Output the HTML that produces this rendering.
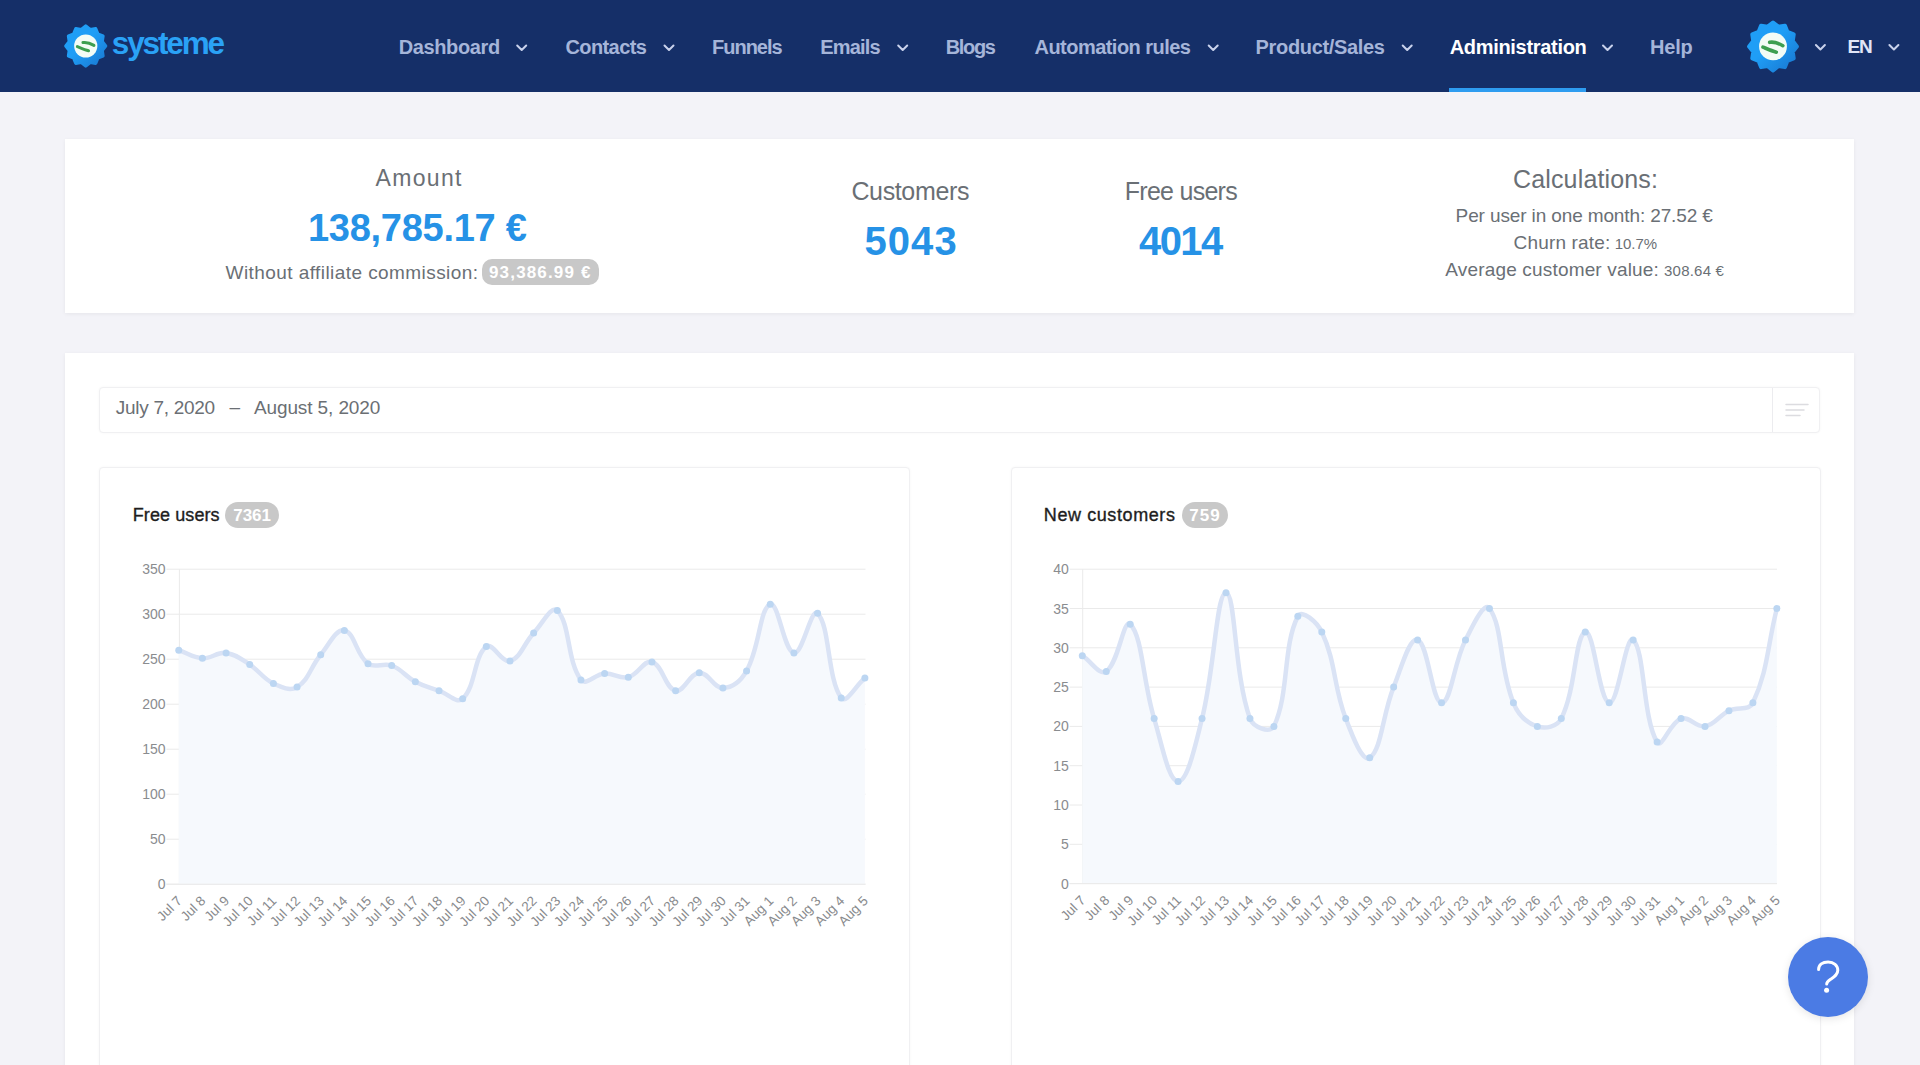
<!DOCTYPE html>
<html lang="en">
<head>
<meta charset="utf-8">
<title>systeme - Administration</title>
<style>
html,body{margin:0;padding:0;}
body{width:1920px;height:1065px;overflow:hidden;position:relative;background:#f3f3f8;font-family:"Liberation Sans",sans-serif;}
.t{position:absolute;white-space:nowrap;}
.nav{position:absolute;left:0;top:0;width:1920px;height:92px;background:#152f68;}
.uline{position:absolute;left:1449px;top:88px;width:137px;height:4px;background:#2e9cf0;}
.card{position:absolute;background:#fff;box-shadow:0 1px 4px rgba(0,0,0,0.06);}
.box{position:absolute;background:#fff;border:1px solid #f0f0f2;border-radius:4px;box-sizing:border-box;box-shadow:0 0 3px rgba(0,0,0,0.035);}
.badge{position:absolute;background:#c8c8c8;border-radius:13px;}
.help{position:absolute;left:1787.6px;top:936.5px;width:80px;height:80px;border-radius:50%;background:#4b7be4;box-shadow:0 2px 8px rgba(0,0,0,0.10);}
svg.ov{position:absolute;left:0;top:0;}
.yl{font-family:"Liberation Sans",sans-serif;font-size:14px;fill:#8a8c8f;}
.xl{font-family:"Liberation Sans",sans-serif;font-size:13.5px;fill:#888a8d;}
</style>
</head>
<body>
<div class="nav"></div>
<div class="uline"></div>

<!-- logo gear -->
<svg class="ov" width="1920" height="92" viewBox="0 0 1920 92">
  
  <g transform="translate(85.75,46)">
      <linearGradient id="gg1" x1="0" y1="0" x2="1" y2="1"><stop offset="0.45" stop-color="#1f9ef6"/><stop offset="1" stop-color="#1876d0"/></linearGradient>
      <polygon points="0.00,-19.90 4.40,-16.42 9.95,-17.23 12.02,-12.02 17.23,-9.95 16.42,-4.40 19.90,0.00 16.42,4.40 17.23,9.95 12.02,12.02 9.95,17.23 4.40,16.42 0.00,19.90 -4.40,16.42 -9.95,17.23 -12.02,12.02 -17.23,9.95 -16.42,4.40 -19.90,0.00 -16.42,-4.40 -17.23,-9.95 -12.02,-12.02 -9.95,-17.23 -4.40,-16.42" fill="url(#gg1)" stroke="url(#gg1)" stroke-width="3.4" stroke-linejoin="round"/>
      <circle cx="0" cy="0" r="11.6" fill="#f3fcf6"/>
      <path d="M-2.8,-3.4 C1,-4 5,-2.5 8.2,-0.6" fill="none" stroke="#3d9f50" stroke-width="3" stroke-linecap="round"/>
      <path d="M-8.4,0.6 C-5,2 -1,3.8 2.8,4.8" fill="none" stroke="#3d9f50" stroke-width="3" stroke-linecap="round"/>
    </g>
  <g transform="translate(1773,46.4) scale(1.2)">
      <linearGradient id="gg2" x1="0" y1="0" x2="1" y2="1"><stop offset="0.45" stop-color="#1f9ef6"/><stop offset="1" stop-color="#1876d0"/></linearGradient>
      <polygon points="0.00,-19.90 4.40,-16.42 9.95,-17.23 12.02,-12.02 17.23,-9.95 16.42,-4.40 19.90,0.00 16.42,4.40 17.23,9.95 12.02,12.02 9.95,17.23 4.40,16.42 0.00,19.90 -4.40,16.42 -9.95,17.23 -12.02,12.02 -17.23,9.95 -16.42,4.40 -19.90,0.00 -16.42,-4.40 -17.23,-9.95 -12.02,-12.02 -9.95,-17.23 -4.40,-16.42" fill="url(#gg2)" stroke="url(#gg2)" stroke-width="3.4" stroke-linejoin="round"/>
      <circle cx="0" cy="0" r="11.6" fill="#f3fcf6"/>
      <path d="M-2.8,-3.4 C1,-4 5,-2.5 8.2,-0.6" fill="none" stroke="#3d9f50" stroke-width="3" stroke-linecap="round"/>
      <path d="M-8.4,0.6 C-5,2 -1,3.8 2.8,4.8" fill="none" stroke="#3d9f50" stroke-width="3" stroke-linecap="round"/>
    </g>
  <g fill="none" stroke="#c9d2ec" stroke-width="2" stroke-linecap="round" stroke-linejoin="round">
    <path d="M517.2,45.5 L521.7,50 L526.2,45.5"/>
    <path d="M664.5,45.5 L669,50 L673.5,45.5"/>
    <path d="M898.2,45.5 L902.7,50 L907.2,45.5"/>
    <path d="M1208.7,45.5 L1213.2,50 L1217.7,45.5"/>
    <path d="M1402.7,45.5 L1407.2,50 L1411.7,45.5"/>
    <path d="M1603,45.5 L1607.5,50 L1612,45.5"/>
    <path d="M1815.9,45 L1820.4,49.5 L1824.9,45"/>
    <path d="M1889.4,45 L1893.9,49.5 L1898.4,45"/>
  </g>
</svg>

<!-- cards -->
<div class="card" style="left:65px;top:139px;width:1789px;height:174px;"></div>
<div class="card" style="left:65px;top:353px;width:1789px;height:760px;"></div>

<div class="box" style="left:99px;top:387px;width:1721px;height:46px;"></div>
<div style="position:absolute;left:1772px;top:388px;width:1px;height:44px;background:#ececef;"></div>
<svg class="ov" style="left:1780px;top:398px" width="34" height="24" viewBox="0 0 34 24">
  <g stroke="#dcdce0" stroke-width="1.5" stroke-linecap="round">
    <line x1="6" y1="6.5" x2="28" y2="6.5"/>
    <line x1="6" y1="12" x2="24" y2="12"/>
    <line x1="6" y1="17.5" x2="20" y2="17.5"/>
  </g>
</svg>

<div class="box" style="left:98.5px;top:467px;width:811px;height:700px;"></div>
<div class="box" style="left:1011px;top:467px;width:809.5px;height:700px;"></div>

<!-- badges -->
<div class="badge" style="left:482px;top:259px;width:117px;height:26px;border-radius:10px;"></div>
<div class="badge" style="left:225px;top:502px;width:54px;height:26px;"></div>
<div class="badge" style="left:1181.5px;top:502px;width:46.5px;height:26px;"></div>

<!-- charts -->
<svg class="ov" width="1920" height="1065" viewBox="0 0 1920 1065">
<line x1="166.4" y1="884.20" x2="865.5" y2="884.20" stroke="#eaeaea" stroke-width="1"/>
<text x="165.5" y="889.20" text-anchor="end" class="yl">0</text>
<line x1="166.4" y1="839.20" x2="865.5" y2="839.20" stroke="#eaeaea" stroke-width="1"/>
<text x="165.5" y="844.20" text-anchor="end" class="yl">50</text>
<line x1="166.4" y1="794.20" x2="865.5" y2="794.20" stroke="#eaeaea" stroke-width="1"/>
<text x="165.5" y="799.20" text-anchor="end" class="yl">100</text>
<line x1="166.4" y1="749.20" x2="865.5" y2="749.20" stroke="#eaeaea" stroke-width="1"/>
<text x="165.5" y="754.20" text-anchor="end" class="yl">150</text>
<line x1="166.4" y1="704.20" x2="865.5" y2="704.20" stroke="#eaeaea" stroke-width="1"/>
<text x="165.5" y="709.20" text-anchor="end" class="yl">200</text>
<line x1="166.4" y1="659.20" x2="865.5" y2="659.20" stroke="#eaeaea" stroke-width="1"/>
<text x="165.5" y="664.20" text-anchor="end" class="yl">250</text>
<line x1="166.4" y1="614.20" x2="865.5" y2="614.20" stroke="#eaeaea" stroke-width="1"/>
<text x="165.5" y="619.20" text-anchor="end" class="yl">300</text>
<line x1="166.4" y1="569.20" x2="865.5" y2="569.20" stroke="#eaeaea" stroke-width="1"/>
<text x="165.5" y="574.20" text-anchor="end" class="yl">350</text>
<line x1="179.4" y1="569.20" x2="179.4" y2="884.20" stroke="#eaeaea" stroke-width="1"/>
<path d="M178.75,650.20 C188.21,653.44 192.80,657.75 202.41,658.30 C211.73,658.83 217.00,651.69 226.07,652.90 C235.93,654.21 240.92,658.90 249.73,664.60 C259.84,671.14 262.82,678.47 273.39,683.50 C281.75,687.47 289.98,691.40 297.05,687.10 C308.91,679.88 310.45,666.99 320.71,654.70 C329.38,644.31 335.78,628.77 344.37,630.40 C354.71,632.37 356.06,654.82 368.03,663.70 C374.98,668.86 383.12,662.24 391.69,665.50 C402.05,669.44 405.30,676.35 415.35,681.70 C424.22,686.43 429.49,687.26 439.01,690.70 C448.42,694.10 456.92,704.16 462.67,698.80 C475.85,686.52 473.57,656.79 486.33,646.60 C492.50,641.67 501.83,663.33 509.99,661.00 C520.76,657.93 523.65,643.75 533.65,633.10 C542.58,623.59 551.47,604.83 557.31,610.60 C570.40,623.55 566.78,661.01 580.97,679.90 C585.71,686.21 595.06,674.15 604.63,673.60 C613.99,673.07 619.60,679.35 628.29,677.20 C638.52,674.67 643.80,659.58 651.95,661.90 C662.73,664.98 665.08,688.30 675.61,690.70 C684.01,692.62 689.55,673.25 699.27,672.70 C708.48,672.17 713.63,688.35 722.93,688.00 C732.56,687.63 741.06,680.69 746.59,670.90 C759.99,647.21 759.52,608.38 770.25,604.30 C778.45,601.18 783.70,650.96 793.91,652.90 C802.63,654.56 811.05,607.10 817.57,613.30 C829.98,625.10 827.22,678.72 841.23,697.90 C846.15,704.64 855.43,686.02 864.89,678.10 L864.89,884.20 L178.75,884.20 Z" fill="#f6f9fd"/>
<line x1="166.4" y1="884.20" x2="865.5" y2="884.20" stroke="#eaeaea" stroke-width="1"/>
<path d="M178.75,650.20 C188.21,653.44 192.80,657.75 202.41,658.30 C211.73,658.83 217.00,651.69 226.07,652.90 C235.93,654.21 240.92,658.90 249.73,664.60 C259.84,671.14 262.82,678.47 273.39,683.50 C281.75,687.47 289.98,691.40 297.05,687.10 C308.91,679.88 310.45,666.99 320.71,654.70 C329.38,644.31 335.78,628.77 344.37,630.40 C354.71,632.37 356.06,654.82 368.03,663.70 C374.98,668.86 383.12,662.24 391.69,665.50 C402.05,669.44 405.30,676.35 415.35,681.70 C424.22,686.43 429.49,687.26 439.01,690.70 C448.42,694.10 456.92,704.16 462.67,698.80 C475.85,686.52 473.57,656.79 486.33,646.60 C492.50,641.67 501.83,663.33 509.99,661.00 C520.76,657.93 523.65,643.75 533.65,633.10 C542.58,623.59 551.47,604.83 557.31,610.60 C570.40,623.55 566.78,661.01 580.97,679.90 C585.71,686.21 595.06,674.15 604.63,673.60 C613.99,673.07 619.60,679.35 628.29,677.20 C638.52,674.67 643.80,659.58 651.95,661.90 C662.73,664.98 665.08,688.30 675.61,690.70 C684.01,692.62 689.55,673.25 699.27,672.70 C708.48,672.17 713.63,688.35 722.93,688.00 C732.56,687.63 741.06,680.69 746.59,670.90 C759.99,647.21 759.52,608.38 770.25,604.30 C778.45,601.18 783.70,650.96 793.91,652.90 C802.63,654.56 811.05,607.10 817.57,613.30 C829.98,625.10 827.22,678.72 841.23,697.90 C846.15,704.64 855.43,686.02 864.89,678.10" fill="none" stroke="#dae3f5" stroke-width="4.5" stroke-linejoin="round"/>
<circle cx="178.75" cy="650.20" r="3.5" fill="#bcd6f2"/>
<circle cx="202.41" cy="658.30" r="3.5" fill="#bcd6f2"/>
<circle cx="226.07" cy="652.90" r="3.5" fill="#bcd6f2"/>
<circle cx="249.73" cy="664.60" r="3.5" fill="#bcd6f2"/>
<circle cx="273.39" cy="683.50" r="3.5" fill="#bcd6f2"/>
<circle cx="297.05" cy="687.10" r="3.5" fill="#bcd6f2"/>
<circle cx="320.71" cy="654.70" r="3.5" fill="#bcd6f2"/>
<circle cx="344.37" cy="630.40" r="3.5" fill="#bcd6f2"/>
<circle cx="368.03" cy="663.70" r="3.5" fill="#bcd6f2"/>
<circle cx="391.69" cy="665.50" r="3.5" fill="#bcd6f2"/>
<circle cx="415.35" cy="681.70" r="3.5" fill="#bcd6f2"/>
<circle cx="439.01" cy="690.70" r="3.5" fill="#bcd6f2"/>
<circle cx="462.67" cy="698.80" r="3.5" fill="#bcd6f2"/>
<circle cx="486.33" cy="646.60" r="3.5" fill="#bcd6f2"/>
<circle cx="509.99" cy="661.00" r="3.5" fill="#bcd6f2"/>
<circle cx="533.65" cy="633.10" r="3.5" fill="#bcd6f2"/>
<circle cx="557.31" cy="610.60" r="3.5" fill="#bcd6f2"/>
<circle cx="580.97" cy="679.90" r="3.5" fill="#bcd6f2"/>
<circle cx="604.63" cy="673.60" r="3.5" fill="#bcd6f2"/>
<circle cx="628.29" cy="677.20" r="3.5" fill="#bcd6f2"/>
<circle cx="651.95" cy="661.90" r="3.5" fill="#bcd6f2"/>
<circle cx="675.61" cy="690.70" r="3.5" fill="#bcd6f2"/>
<circle cx="699.27" cy="672.70" r="3.5" fill="#bcd6f2"/>
<circle cx="722.93" cy="688.00" r="3.5" fill="#bcd6f2"/>
<circle cx="746.59" cy="670.90" r="3.5" fill="#bcd6f2"/>
<circle cx="770.25" cy="604.30" r="3.5" fill="#bcd6f2"/>
<circle cx="793.91" cy="652.90" r="3.5" fill="#bcd6f2"/>
<circle cx="817.57" cy="613.30" r="3.5" fill="#bcd6f2"/>
<circle cx="841.23" cy="697.90" r="3.5" fill="#bcd6f2"/>
<circle cx="864.89" cy="678.10" r="3.5" fill="#bcd6f2"/>
<text class="xl" text-anchor="end" transform="translate(182.75,901.70) rotate(-45)">Jul 7</text>
<text class="xl" text-anchor="end" transform="translate(206.41,901.70) rotate(-45)">Jul 8</text>
<text class="xl" text-anchor="end" transform="translate(230.07,901.70) rotate(-45)">Jul 9</text>
<text class="xl" text-anchor="end" transform="translate(253.73,901.70) rotate(-45)">Jul 10</text>
<text class="xl" text-anchor="end" transform="translate(277.39,901.70) rotate(-45)">Jul 11</text>
<text class="xl" text-anchor="end" transform="translate(301.05,901.70) rotate(-45)">Jul 12</text>
<text class="xl" text-anchor="end" transform="translate(324.71,901.70) rotate(-45)">Jul 13</text>
<text class="xl" text-anchor="end" transform="translate(348.37,901.70) rotate(-45)">Jul 14</text>
<text class="xl" text-anchor="end" transform="translate(372.03,901.70) rotate(-45)">Jul 15</text>
<text class="xl" text-anchor="end" transform="translate(395.69,901.70) rotate(-45)">Jul 16</text>
<text class="xl" text-anchor="end" transform="translate(419.35,901.70) rotate(-45)">Jul 17</text>
<text class="xl" text-anchor="end" transform="translate(443.01,901.70) rotate(-45)">Jul 18</text>
<text class="xl" text-anchor="end" transform="translate(466.67,901.70) rotate(-45)">Jul 19</text>
<text class="xl" text-anchor="end" transform="translate(490.33,901.70) rotate(-45)">Jul 20</text>
<text class="xl" text-anchor="end" transform="translate(513.99,901.70) rotate(-45)">Jul 21</text>
<text class="xl" text-anchor="end" transform="translate(537.65,901.70) rotate(-45)">Jul 22</text>
<text class="xl" text-anchor="end" transform="translate(561.31,901.70) rotate(-45)">Jul 23</text>
<text class="xl" text-anchor="end" transform="translate(584.97,901.70) rotate(-45)">Jul 24</text>
<text class="xl" text-anchor="end" transform="translate(608.63,901.70) rotate(-45)">Jul 25</text>
<text class="xl" text-anchor="end" transform="translate(632.29,901.70) rotate(-45)">Jul 26</text>
<text class="xl" text-anchor="end" transform="translate(655.95,901.70) rotate(-45)">Jul 27</text>
<text class="xl" text-anchor="end" transform="translate(679.61,901.70) rotate(-45)">Jul 28</text>
<text class="xl" text-anchor="end" transform="translate(703.27,901.70) rotate(-45)">Jul 29</text>
<text class="xl" text-anchor="end" transform="translate(726.93,901.70) rotate(-45)">Jul 30</text>
<text class="xl" text-anchor="end" transform="translate(750.59,901.70) rotate(-45)">Jul 31</text>
<text class="xl" text-anchor="end" transform="translate(774.25,901.70) rotate(-45)">Aug 1</text>
<text class="xl" text-anchor="end" transform="translate(797.91,901.70) rotate(-45)">Aug 2</text>
<text class="xl" text-anchor="end" transform="translate(821.57,901.70) rotate(-45)">Aug 3</text>
<text class="xl" text-anchor="end" transform="translate(845.23,901.70) rotate(-45)">Aug 4</text>
<text class="xl" text-anchor="end" transform="translate(868.89,901.70) rotate(-45)">Aug 5</text>
<line x1="1069.7" y1="883.60" x2="1777.0" y2="883.60" stroke="#eaeaea" stroke-width="1"/>
<text x="1068.8" y="888.60" text-anchor="end" class="yl">0</text>
<line x1="1069.7" y1="844.30" x2="1777.0" y2="844.30" stroke="#eaeaea" stroke-width="1"/>
<text x="1068.8" y="849.30" text-anchor="end" class="yl">5</text>
<line x1="1069.7" y1="805.00" x2="1777.0" y2="805.00" stroke="#eaeaea" stroke-width="1"/>
<text x="1068.8" y="810.00" text-anchor="end" class="yl">10</text>
<line x1="1069.7" y1="765.70" x2="1777.0" y2="765.70" stroke="#eaeaea" stroke-width="1"/>
<text x="1068.8" y="770.70" text-anchor="end" class="yl">15</text>
<line x1="1069.7" y1="726.40" x2="1777.0" y2="726.40" stroke="#eaeaea" stroke-width="1"/>
<text x="1068.8" y="731.40" text-anchor="end" class="yl">20</text>
<line x1="1069.7" y1="687.10" x2="1777.0" y2="687.10" stroke="#eaeaea" stroke-width="1"/>
<text x="1068.8" y="692.10" text-anchor="end" class="yl">25</text>
<line x1="1069.7" y1="647.80" x2="1777.0" y2="647.80" stroke="#eaeaea" stroke-width="1"/>
<text x="1068.8" y="652.80" text-anchor="end" class="yl">30</text>
<line x1="1069.7" y1="608.50" x2="1777.0" y2="608.50" stroke="#eaeaea" stroke-width="1"/>
<text x="1068.8" y="613.50" text-anchor="end" class="yl">35</text>
<line x1="1069.7" y1="569.20" x2="1777.0" y2="569.20" stroke="#eaeaea" stroke-width="1"/>
<text x="1068.8" y="574.20" text-anchor="end" class="yl">40</text>
<line x1="1082.7" y1="569.20" x2="1082.7" y2="883.60" stroke="#eaeaea" stroke-width="1"/>
<path d="M1082.30,655.66 C1091.88,661.95 1099.52,675.80 1106.25,671.38 C1118.68,663.22 1123.45,617.58 1130.20,624.22 C1142.61,636.44 1142.82,681.36 1154.15,718.54 C1161.98,744.24 1168.52,781.42 1178.10,781.42 C1187.68,781.42 1195.45,744.54 1202.05,718.54 C1214.61,669.08 1216.42,592.78 1226.00,592.78 C1235.58,592.78 1233.94,673.88 1249.95,718.54 C1253.10,727.33 1270.40,733.88 1273.90,726.40 C1289.56,693.00 1282.58,646.44 1297.85,616.36 C1301.74,608.71 1317.16,622.19 1321.80,632.08 C1336.32,663.06 1333.09,685.29 1345.75,718.54 C1352.25,735.60 1362.39,762.63 1369.70,757.84 C1381.55,750.06 1382.43,714.71 1393.65,687.10 C1401.59,667.55 1409.17,637.17 1417.60,639.94 C1428.33,643.46 1431.97,702.82 1441.55,702.82 C1451.13,702.82 1453.43,663.71 1465.50,639.94 C1472.59,625.98 1483.92,601.24 1489.45,608.50 C1503.08,626.39 1499.16,667.77 1513.40,702.82 C1518.32,714.93 1526.40,722.81 1537.35,726.40 C1545.56,729.09 1557.10,726.82 1561.30,718.54 C1576.26,689.09 1574.79,635.51 1585.25,632.08 C1593.95,629.22 1599.12,701.17 1609.20,702.82 C1618.28,704.31 1625.66,633.80 1633.15,639.94 C1644.82,649.52 1642.59,718.31 1657.10,742.12 C1661.75,749.75 1670.10,722.13 1681.05,718.54 C1689.26,715.85 1696.03,727.87 1705.00,726.40 C1715.19,724.73 1718.76,715.70 1728.95,710.68 C1737.92,706.27 1748.96,711.23 1752.90,702.82 C1768.12,670.36 1767.27,646.23 1776.85,608.50 L1776.85,883.60 L1082.30,883.60 Z" fill="#f6f9fd"/>
<line x1="1069.7" y1="883.60" x2="1777.0" y2="883.60" stroke="#eaeaea" stroke-width="1"/>
<path d="M1082.30,655.66 C1091.88,661.95 1099.52,675.80 1106.25,671.38 C1118.68,663.22 1123.45,617.58 1130.20,624.22 C1142.61,636.44 1142.82,681.36 1154.15,718.54 C1161.98,744.24 1168.52,781.42 1178.10,781.42 C1187.68,781.42 1195.45,744.54 1202.05,718.54 C1214.61,669.08 1216.42,592.78 1226.00,592.78 C1235.58,592.78 1233.94,673.88 1249.95,718.54 C1253.10,727.33 1270.40,733.88 1273.90,726.40 C1289.56,693.00 1282.58,646.44 1297.85,616.36 C1301.74,608.71 1317.16,622.19 1321.80,632.08 C1336.32,663.06 1333.09,685.29 1345.75,718.54 C1352.25,735.60 1362.39,762.63 1369.70,757.84 C1381.55,750.06 1382.43,714.71 1393.65,687.10 C1401.59,667.55 1409.17,637.17 1417.60,639.94 C1428.33,643.46 1431.97,702.82 1441.55,702.82 C1451.13,702.82 1453.43,663.71 1465.50,639.94 C1472.59,625.98 1483.92,601.24 1489.45,608.50 C1503.08,626.39 1499.16,667.77 1513.40,702.82 C1518.32,714.93 1526.40,722.81 1537.35,726.40 C1545.56,729.09 1557.10,726.82 1561.30,718.54 C1576.26,689.09 1574.79,635.51 1585.25,632.08 C1593.95,629.22 1599.12,701.17 1609.20,702.82 C1618.28,704.31 1625.66,633.80 1633.15,639.94 C1644.82,649.52 1642.59,718.31 1657.10,742.12 C1661.75,749.75 1670.10,722.13 1681.05,718.54 C1689.26,715.85 1696.03,727.87 1705.00,726.40 C1715.19,724.73 1718.76,715.70 1728.95,710.68 C1737.92,706.27 1748.96,711.23 1752.90,702.82 C1768.12,670.36 1767.27,646.23 1776.85,608.50" fill="none" stroke="#dae3f5" stroke-width="4.5" stroke-linejoin="round"/>
<circle cx="1082.30" cy="655.66" r="3.5" fill="#bcd6f2"/>
<circle cx="1106.25" cy="671.38" r="3.5" fill="#bcd6f2"/>
<circle cx="1130.20" cy="624.22" r="3.5" fill="#bcd6f2"/>
<circle cx="1154.15" cy="718.54" r="3.5" fill="#bcd6f2"/>
<circle cx="1178.10" cy="781.42" r="3.5" fill="#bcd6f2"/>
<circle cx="1202.05" cy="718.54" r="3.5" fill="#bcd6f2"/>
<circle cx="1226.00" cy="592.78" r="3.5" fill="#bcd6f2"/>
<circle cx="1249.95" cy="718.54" r="3.5" fill="#bcd6f2"/>
<circle cx="1273.90" cy="726.40" r="3.5" fill="#bcd6f2"/>
<circle cx="1297.85" cy="616.36" r="3.5" fill="#bcd6f2"/>
<circle cx="1321.80" cy="632.08" r="3.5" fill="#bcd6f2"/>
<circle cx="1345.75" cy="718.54" r="3.5" fill="#bcd6f2"/>
<circle cx="1369.70" cy="757.84" r="3.5" fill="#bcd6f2"/>
<circle cx="1393.65" cy="687.10" r="3.5" fill="#bcd6f2"/>
<circle cx="1417.60" cy="639.94" r="3.5" fill="#bcd6f2"/>
<circle cx="1441.55" cy="702.82" r="3.5" fill="#bcd6f2"/>
<circle cx="1465.50" cy="639.94" r="3.5" fill="#bcd6f2"/>
<circle cx="1489.45" cy="608.50" r="3.5" fill="#bcd6f2"/>
<circle cx="1513.40" cy="702.82" r="3.5" fill="#bcd6f2"/>
<circle cx="1537.35" cy="726.40" r="3.5" fill="#bcd6f2"/>
<circle cx="1561.30" cy="718.54" r="3.5" fill="#bcd6f2"/>
<circle cx="1585.25" cy="632.08" r="3.5" fill="#bcd6f2"/>
<circle cx="1609.20" cy="702.82" r="3.5" fill="#bcd6f2"/>
<circle cx="1633.15" cy="639.94" r="3.5" fill="#bcd6f2"/>
<circle cx="1657.10" cy="742.12" r="3.5" fill="#bcd6f2"/>
<circle cx="1681.05" cy="718.54" r="3.5" fill="#bcd6f2"/>
<circle cx="1705.00" cy="726.40" r="3.5" fill="#bcd6f2"/>
<circle cx="1728.95" cy="710.68" r="3.5" fill="#bcd6f2"/>
<circle cx="1752.90" cy="702.82" r="3.5" fill="#bcd6f2"/>
<circle cx="1776.85" cy="608.50" r="3.5" fill="#bcd6f2"/>
<text class="xl" text-anchor="end" transform="translate(1086.30,901.10) rotate(-45)">Jul 7</text>
<text class="xl" text-anchor="end" transform="translate(1110.25,901.10) rotate(-45)">Jul 8</text>
<text class="xl" text-anchor="end" transform="translate(1134.20,901.10) rotate(-45)">Jul 9</text>
<text class="xl" text-anchor="end" transform="translate(1158.15,901.10) rotate(-45)">Jul 10</text>
<text class="xl" text-anchor="end" transform="translate(1182.10,901.10) rotate(-45)">Jul 11</text>
<text class="xl" text-anchor="end" transform="translate(1206.05,901.10) rotate(-45)">Jul 12</text>
<text class="xl" text-anchor="end" transform="translate(1230.00,901.10) rotate(-45)">Jul 13</text>
<text class="xl" text-anchor="end" transform="translate(1253.95,901.10) rotate(-45)">Jul 14</text>
<text class="xl" text-anchor="end" transform="translate(1277.90,901.10) rotate(-45)">Jul 15</text>
<text class="xl" text-anchor="end" transform="translate(1301.85,901.10) rotate(-45)">Jul 16</text>
<text class="xl" text-anchor="end" transform="translate(1325.80,901.10) rotate(-45)">Jul 17</text>
<text class="xl" text-anchor="end" transform="translate(1349.75,901.10) rotate(-45)">Jul 18</text>
<text class="xl" text-anchor="end" transform="translate(1373.70,901.10) rotate(-45)">Jul 19</text>
<text class="xl" text-anchor="end" transform="translate(1397.65,901.10) rotate(-45)">Jul 20</text>
<text class="xl" text-anchor="end" transform="translate(1421.60,901.10) rotate(-45)">Jul 21</text>
<text class="xl" text-anchor="end" transform="translate(1445.55,901.10) rotate(-45)">Jul 22</text>
<text class="xl" text-anchor="end" transform="translate(1469.50,901.10) rotate(-45)">Jul 23</text>
<text class="xl" text-anchor="end" transform="translate(1493.45,901.10) rotate(-45)">Jul 24</text>
<text class="xl" text-anchor="end" transform="translate(1517.40,901.10) rotate(-45)">Jul 25</text>
<text class="xl" text-anchor="end" transform="translate(1541.35,901.10) rotate(-45)">Jul 26</text>
<text class="xl" text-anchor="end" transform="translate(1565.30,901.10) rotate(-45)">Jul 27</text>
<text class="xl" text-anchor="end" transform="translate(1589.25,901.10) rotate(-45)">Jul 28</text>
<text class="xl" text-anchor="end" transform="translate(1613.20,901.10) rotate(-45)">Jul 29</text>
<text class="xl" text-anchor="end" transform="translate(1637.15,901.10) rotate(-45)">Jul 30</text>
<text class="xl" text-anchor="end" transform="translate(1661.10,901.10) rotate(-45)">Jul 31</text>
<text class="xl" text-anchor="end" transform="translate(1685.05,901.10) rotate(-45)">Aug 1</text>
<text class="xl" text-anchor="end" transform="translate(1709.00,901.10) rotate(-45)">Aug 2</text>
<text class="xl" text-anchor="end" transform="translate(1732.95,901.10) rotate(-45)">Aug 3</text>
<text class="xl" text-anchor="end" transform="translate(1756.90,901.10) rotate(-45)">Aug 4</text>
<text class="xl" text-anchor="end" transform="translate(1780.85,901.10) rotate(-45)">Aug 5</text>
</svg>

<div class="t" style="left:111.80px;top:28.30px;font-size:31.5px;line-height:31.5px;font-weight:700;color:#2aa2f6;letter-spacing:-2.146px;">systeme</div>
<div class="t" style="left:398.70px;top:36.50px;font-size:20px;line-height:20px;font-weight:700;color:#a5b5d9;letter-spacing:-0.368px;">Dashboard</div>
<div class="t" style="left:565.50px;top:36.50px;font-size:20px;line-height:20px;font-weight:700;color:#a5b5d9;letter-spacing:-0.606px;">Contacts</div>
<div class="t" style="left:712.00px;top:36.50px;font-size:20px;line-height:20px;font-weight:700;color:#a5b5d9;letter-spacing:-1.008px;">Funnels</div>
<div class="t" style="left:820.30px;top:36.50px;font-size:20px;line-height:20px;font-weight:700;color:#a5b5d9;letter-spacing:-0.832px;">Emails</div>
<div class="t" style="left:945.70px;top:36.50px;font-size:20px;line-height:20px;font-weight:700;color:#a5b5d9;letter-spacing:-1.333px;">Blogs</div>
<div class="t" style="left:1034.50px;top:36.50px;font-size:20px;line-height:20px;font-weight:700;color:#a5b5d9;letter-spacing:-0.535px;">Automation rules</div>
<div class="t" style="left:1255.60px;top:36.50px;font-size:20px;line-height:20px;font-weight:700;color:#a5b5d9;letter-spacing:-0.346px;">Product/Sales</div>
<div class="t" style="left:1449.70px;top:36.50px;font-size:20px;line-height:20px;font-weight:700;color:#ffffff;letter-spacing:-0.307px;">Administration</div>
<div class="t" style="left:1650.00px;top:36.50px;font-size:20px;line-height:20px;font-weight:700;color:#a5b5d9;letter-spacing:-0.174px;">Help</div>
<div class="t" style="left:1847.60px;top:36.60px;font-size:19px;line-height:19px;font-weight:700;color:#e1e5f7;letter-spacing:-1.273px;">EN</div>
<div class="t" style="left:375.60px;top:167.30px;font-size:23px;line-height:23px;font-weight:400;color:#6a6f75;letter-spacing:1.305px;">Amount</div>
<div class="t" style="left:308.00px;top:208.80px;font-size:38px;line-height:38px;font-weight:700;color:#2692e6;letter-spacing:-0.277px;">138,785.17 €</div>
<div class="t" style="left:225.60px;top:263.00px;font-size:19px;line-height:19px;font-weight:400;color:#6a6f75;letter-spacing:0.428px;">Without affiliate commission:</div>
<div class="t" style="left:489.00px;top:264.00px;font-size:17px;line-height:17px;font-weight:700;color:#ffffff;letter-spacing:1.165px;">93,386.99 €</div>
<div class="t" style="left:851.40px;top:178.70px;font-size:25px;line-height:25px;font-weight:400;color:#6a6f75;letter-spacing:-0.358px;">Customers</div>
<div class="t" style="left:864.40px;top:220.60px;font-size:40px;line-height:40px;font-weight:700;color:#2692e6;letter-spacing:1.087px;">5043</div>
<div class="t" style="left:1124.80px;top:178.70px;font-size:25px;line-height:25px;font-weight:400;color:#6a6f75;letter-spacing:-0.731px;">Free users</div>
<div class="t" style="left:1139.00px;top:220.60px;font-size:40px;line-height:40px;font-weight:700;color:#2692e6;letter-spacing:-1.579px;">4014</div>
<div class="t" style="left:1513.00px;top:166.80px;font-size:25px;line-height:25px;font-weight:400;color:#6a6f75;letter-spacing:0.152px;">Calculations:</div>
<div class="t" style="left:1455.60px;top:206.20px;font-size:19px;line-height:19px;font-weight:400;color:#6a6f75;letter-spacing:-0.125px;">Per user in one month: 27.52 €</div>
<div class="t" style="left:1513.60px;top:233.30px;font-size:19px;line-height:19px;font-weight:400;color:#6a6f75;letter-spacing:0.153px;">Churn rate:</div>
<div class="t" style="left:1614.70px;top:236.30px;font-size:15px;line-height:15px;font-weight:400;color:#6a6f75;letter-spacing:-0.024px;">10.7%</div>
<div class="t" style="left:1445.30px;top:260.00px;font-size:19px;line-height:19px;font-weight:400;color:#6a6f75;letter-spacing:0.171px;">Average customer value:</div>
<div class="t" style="left:1664.00px;top:263.00px;font-size:15px;line-height:15px;font-weight:400;color:#6a6f75;letter-spacing:0.222px;">308.64 €</div>
<div class="t" style="left:115.80px;top:398.20px;font-size:19px;line-height:19px;font-weight:400;color:#6b6f74;letter-spacing:-0.281px;">July 7, 2020</div>
<div class="t" style="left:229.60px;top:397.00px;font-size:19px;line-height:19px;font-weight:400;color:#6b6f74;letter-spacing:0.000px;">–</div>
<div class="t" style="left:253.90px;top:398.20px;font-size:19px;line-height:19px;font-weight:400;color:#6b6f74;letter-spacing:-0.104px;">August 5, 2020</div>
<div class="t" style="left:132.75px;top:506.20px;font-size:18px;line-height:18px;font-weight:400;color:#1e1e1e;letter-spacing:0.091px;-webkit-text-stroke:0.35px #1e1e1e;">Free users</div>
<div class="t" style="left:233.30px;top:507.20px;font-size:17px;line-height:17px;font-weight:700;color:#ffffff;letter-spacing:-0.055px;">7361</div>
<div class="t" style="left:1043.80px;top:506.20px;font-size:18px;line-height:18px;font-weight:400;color:#1e1e1e;letter-spacing:0.589px;-webkit-text-stroke:0.35px #1e1e1e;">New customers</div>
<div class="t" style="left:1189.30px;top:507.20px;font-size:17px;line-height:17px;font-weight:700;color:#ffffff;letter-spacing:0.995px;">759</div>

<div class="help"><svg width="80" height="80" viewBox="0 0 80 80"><path d="M30.6,32.4 C30.6,27.6 34.6,24.9 40.1,24.9 C45.8,24.9 49.8,28.4 49.8,33.3 C49.8,37.8 46.4,39.8 42.6,42.3 C39.8,44.2 38.7,45.3 38.7,47" fill="none" stroke="#fff" stroke-width="3" stroke-linecap="round"/><circle cx="38.6" cy="53.2" r="2.5" fill="#fff"/></svg></div>
</body>
</html>
